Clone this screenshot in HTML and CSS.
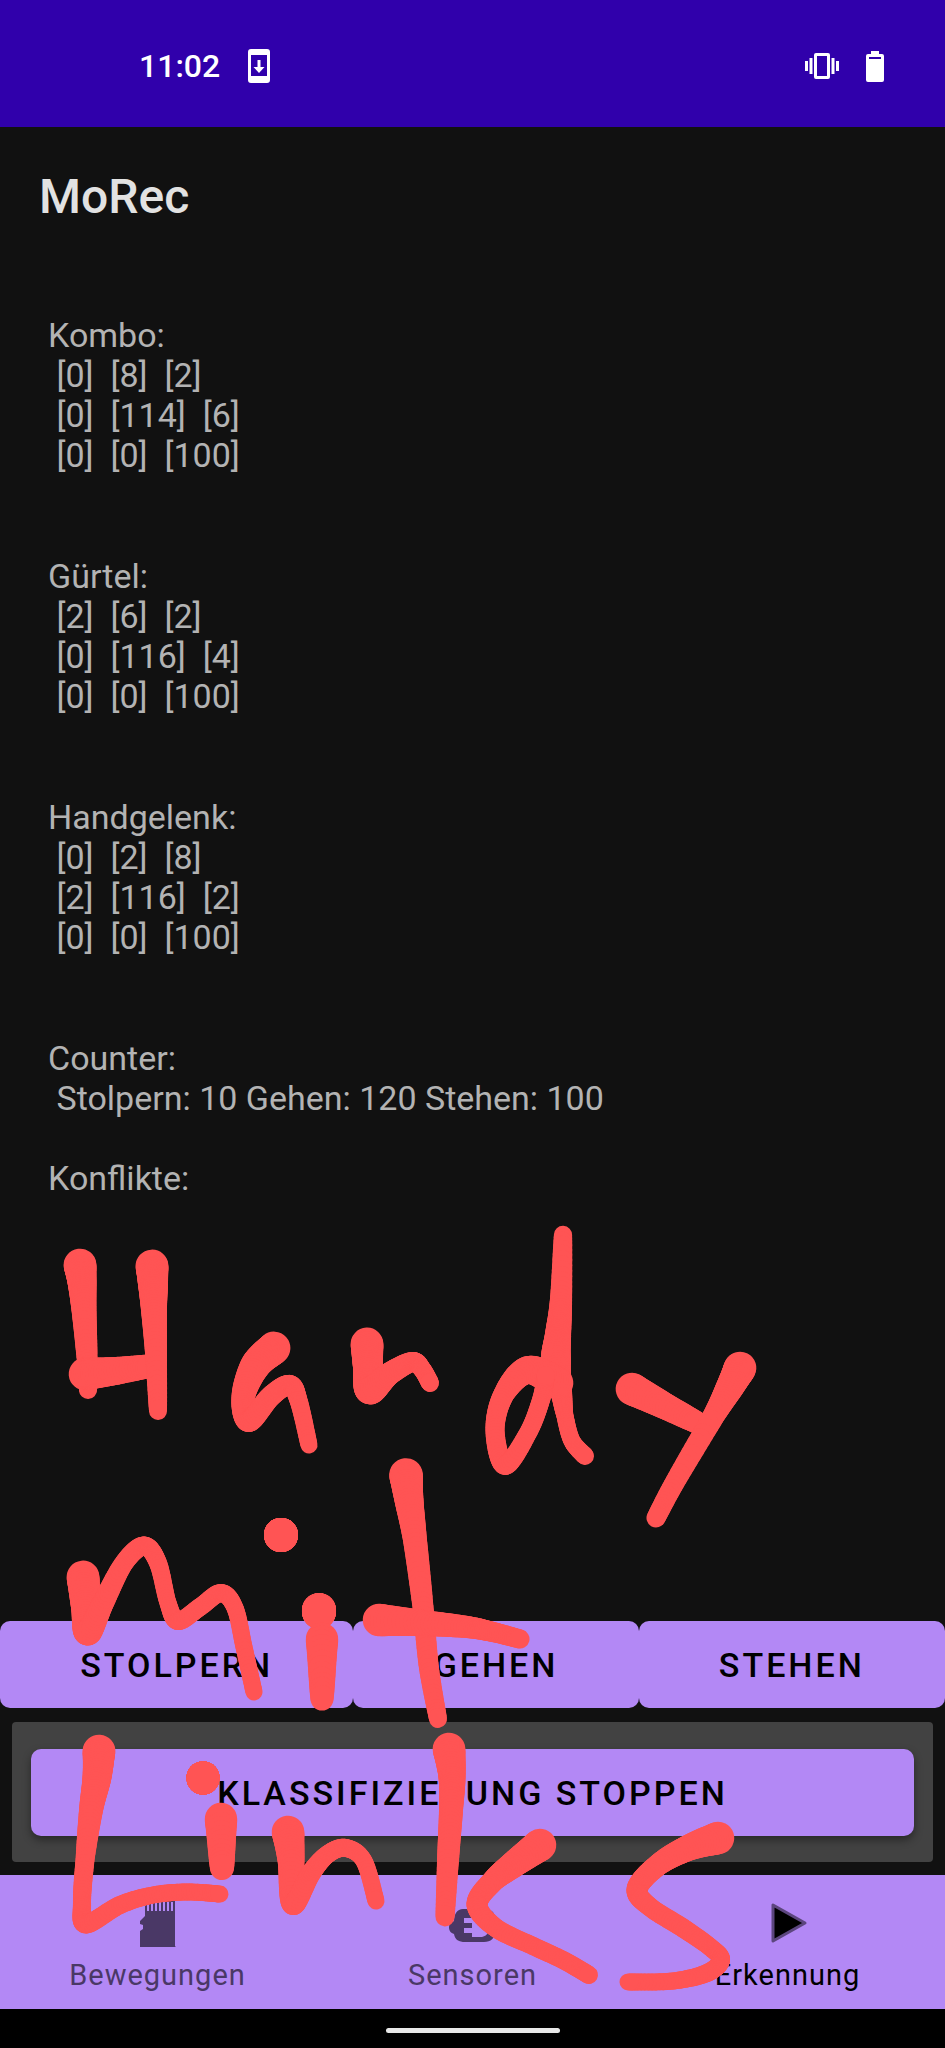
FILE: index.html
```
<!DOCTYPE html>
<html lang="de">
<head>
<meta charset="utf-8">
<meta name="viewport" content="width=device-width, initial-scale=1">
<title>MoRec</title>
<link rel="stylesheet" href="styles.css">
</head>
<body>
<div class="screen">
  <div class="status">
    <span class="clock">11:02</span>
    <svg class="status-icon" width="22" height="34" viewBox="0 0 22 34" aria-hidden="true">
      <path fill="#fff" fill-rule="evenodd" d="M3 0h16a3 3 0 0 1 3 3v28a3 3 0 0 1-3 3H3a3 3 0 0 1-3-3V3a3 3 0 0 1 3-3zM3 6v21h16V6zM9.500 11h3v7h4L11 24l-5.500-6h4z"/>
    </svg>
    <span class="spacer"></span>
    <svg class="status-icon" width="34" height="26" viewBox="0 0 34 26" aria-hidden="true">
      <path fill="#fff" fill-rule="evenodd" d="M0 8h3v10H0zM4.500 5h3v16h-3zM26.500 5h3v16h-3zM31 8h3v10h-3zM11 0h12a2 2 0 0 1 2 2v22a2 2 0 0 1-2 2H11a2 2 0 0 1-2-2V2a2 2 0 0 1 2-2zM12 3v20h10V3z"/>
    </svg>
    <svg class="battery" width="18" height="31" viewBox="0 0 18 31" aria-hidden="true">
      <path fill="#fff" fill-rule="evenodd" d="M5 0h8v3h3a2 2 0 0 1 2 2v24a2 2 0 0 1-2 2H2a2 2 0 0 1-2-2V5a2 2 0 0 1 2-2h3zM3 6v2h12V6z"/>
    </svg>
  </div>
  <header class="appbar"><h1>MoRec</h1></header>
  <main class="results">
    <section class="block">Kombo:
 [0]  [8]  [2]
 [0]  [114]  [6]
 [0]  [0]  [100]</section>
    <section class="block">Gürtel:
 [2]  [6]  [2]
 [0]  [116]  [4]
 [0]  [0]  [100]</section>
    <section class="block">Handgelenk:
 [0]  [2]  [8]
 [2]  [116]  [2]
 [0]  [0]  [100]</section>
    <section class="block">Counter:
 Stolpern: 10 Gehen: 120 Stehen: 100

Konflikte:</section>
  </main>
  <div class="choices">
    <button class="btn" type="button">STOLPERN</button>
    <button class="btn" type="button">GEHEN</button>
    <button class="btn" type="button">STEHEN</button>
  </div>
  <div class="card">
    <button class="btn raised" type="button">KLASSIFIZIERUNG STOPPEN</button>
  </div>
  <nav class="tabs">
    <a class="tab" href="#bewegungen">
      <svg width="48" height="48" viewBox="0 0 48 48" aria-hidden="true">
        <path fill="currentColor" d="M16 1h24a1 1 0 0 1 1 1v45a1 1 0 0 1-1 2H7a1 1 0 0 1-1-1V32l3-2v-4l-3-1v-3l5-5V7z"/>
        <path stroke="#b388f5" stroke-width="2" d="M14 3v9M18 3v9M22 3v9M26 3v9M30 3v9M34 3v9M38 3v9"/>
      </svg>
      <span>Bewegungen</span>
    </a>
    <a class="tab" href="#sensoren">
      <svg width="48" height="48" viewBox="0 0 48 48" aria-hidden="true">
        <path fill="currentColor" fill-rule="evenodd" d="M14 10h24c5 1 8 4 8 9v14c0 6-4 10-11 10H16c-6 0-10-2-11-8-3-1-5-3-5-7 0-3 2-5 5-6 0-7 3-12 9-12zM15 19v5h8v5h-8v5h8v4h10c4-1 6-3 6-7v-8c0-3-2-4-5-4z"/>
      </svg>
      <span>Sensoren</span>
    </a>
    <a class="tab active" href="#erkennung" aria-current="page">
      <svg width="48" height="48" viewBox="0 0 48 48" aria-hidden="true">
        <path fill="currentColor" stroke="#5c467e" stroke-width="3" stroke-linejoin="round" d="M9 6v36l32-18z"/>
      </svg>
      <span>Erkennung</span>
    </a>
  </nav>
  <div class="gesture"><span class="pill"></span></div>
  <svg class="ink" viewBox="0 0 945 2048" role="img" aria-label="Handy mit Links"></svg>
</div>
<script src="ink.js"></script>
</body>
</html>
```
FILE: styles.css
```
* { box-sizing: border-box; }
body {
  margin: 0;
  background: #111;
  font-family: Roboto, "Noto Sans", sans-serif;
}
.screen {
  position: relative;
  min-height: 100vh;
  display: flex;
  flex-direction: column;
}
.status {
  display: flex;
  align-items: center;
  height: 127px;
  padding: 5px 61px 0 139px;
  background: #3000ab;
}
.clock {
  width: 109px;
  color: #fff;
  font-size: 32px;
  font-weight: 500;
}
.spacer { flex: 1; }
.battery { margin-left: 27px; }
.appbar { padding: 40px 39px 0; }
h1 {
  margin: 0;
  color: #e2e2e2;
  font-size: 48px;
  line-height: 60px;
  font-weight: 500;
}
.results {
  flex: 1;
  display: flex;
  flex-direction: column;
  gap: 81px;
  padding: 88px 48px 0;
  color: #b3b3b3;
  font-size: 34px;
  line-height: 40px;
}
.block { white-space: pre-wrap; }
.choices { display: flex; }
.btn {
  flex: 1 1 auto;
  height: 87px;
  padding: 0 30px;
  border: 0;
  border-radius: 10px;
  background: #b388f5;
  color: #000;
  font-family: inherit;
  font-size: 34px;
  font-weight: 500;
  letter-spacing: 3px;
}
.card {
  display: flex;
  margin: 14px 12px 13px;
  padding: 27px 19px 26px;
  border-radius: 4px;
  background: #424242;
}
.raised { box-shadow: 0 4px 8px rgba(0, 0, 0, 0.4); }
.tabs {
  display: flex;
  height: 134px;
  background: #b388f5;
}
.tab {
  flex: 1;
  display: flex;
  flex-direction: column;
  align-items: center;
  gap: 10px;
  padding-top: 24px;
  color: #4a3866;
  font-size: 29px;
  line-height: 36px;
  letter-spacing: 1px;
  text-decoration: none;
}
.tab.active { color: #000; }
.gesture {
  display: flex;
  justify-content: center;
  height: 39px;
  padding-top: 19px;
  background: #000;
}
.pill {
  width: 174px;
  height: 5px;
  border-radius: 3px;
  background: #e8e8e8;
}
.ink {
  position: absolute;
  top: 0;
  left: 0;
  width: 100%;
  height: 100%;
  pointer-events: none;
}
```
FILE: ink.js
```
// Freehand marker strokes: each point is [x, y, pen width].
const strokes = [
  [[80,1265,33],[82,1282,29],[84,1310,25],[87,1357,21],[88,1390,18]],
  [[85,1374,33],[115,1371,28],[150,1366,23]],
  [[152,1266,33],[153,1284,30],[154,1310,26],[156,1353,22],[158,1411,18]],
  [[274,1348,33],[255,1366,30],[243,1398,23],[249,1421,22],[271,1396,21],[290,1385,20],[299,1402,18],[309,1445,17]],
  [[367,1344,33],[368,1367,30],[370,1390,29],[389,1374,23],[412,1362,20],[422,1369,18],[430,1383,18]],
  [[563,1235,18],[561,1300,22],[558,1335,26],[556,1360,30],[561,1390,22],[565,1416,17],[572,1441,17],[585,1456,18]],
  [[557,1383,33],[528,1370,28],[504,1394,21],[495,1430,19],[505,1465,20],[528,1433,18],[541,1400,18],[546,1375,18]],
  [[632,1389,33],[663,1405,27],[698,1423,22]],
  [[740,1368,33],[730,1387,28],[713,1417,22],[675,1482,20],[656,1518,19]],
  [[83,1577,33],[86,1607,30],[88,1632,27],[103,1603,22],[124,1563,19],[144,1546,19],[158,1563,18],[168,1603,17],[178,1621,18],[200,1607,18],[221,1593,18],[235,1608,17],[244,1647,17],[254,1692,17]],
  [[281,1535,34],[281,1535,34]],
  [[319,1610,34],[319,1612,34]],
  [[322,1639,33],[322,1699,23]],
  [[406,1475,34],[409,1500,29],[415,1540,24],[423,1607,21],[429,1668,20],[438,1719,18]],
  [[379,1620,33],[423,1623,26],[467,1627,22],[493,1632,20],[520,1639,19]],
  [[99,1751,33],[97,1777,29],[91,1810,24],[85,1860,19],[82,1903,18],[86,1924,19],[120,1905,18],[153,1895,17],[187,1892,17],[220,1894,17]],
  [[203,1778,33],[203,1778,33]],
  [[221,1819,33],[222,1868,24]],
  [[288,1832,33],[291,1860,27],[293,1904,22],[311,1873,20],[328,1854,18],[346,1848,18],[364,1861,17],[376,1901,17]],
  [[449,1749,33],[452,1777,27],[451,1810,24],[448,1860,22],[445,1917,19]],
  [[540,1845,33],[514,1864,27],[492,1882,22],[477,1905,21],[496,1928,19],[533,1946,18],[563,1960,18],[589,1975,18]],
  [[718,1838,33],[688,1848,26],[658,1865,22],[637,1889,21],[650,1907,19],[683,1928,19],[710,1947,18],[721,1960,18],[707,1973,18],[673,1981,17],[628,1982,17]]
];

const ink = document.querySelector(".ink");
const STEPS = 14;

function spline(a, b, c, d, t) {
  return 0.5 * (2 * b + (c - a) * t + (2 * a - 5 * b + 4 * c - d) * t * t + (3 * b - a - 3 * c + d) * t * t * t);
}

for (const points of strokes) {
  const at = (i) => points[Math.max(0, Math.min(points.length - 1, i))];
  let last = points[0];
  for (let i = 0; i < points.length - 1; i++) {
    for (let s = 1; s <= STEPS; s++) {
      const t = s / STEPS;
      const next = [0, 1].map((k) => spline(at(i - 1)[k], at(i)[k], at(i + 1)[k], at(i + 2)[k], t));
      next.push(at(i)[2] + (at(i + 1)[2] - at(i)[2]) * t);
      const line = document.createElementNS("http://www.w3.org/2000/svg", "line");
      line.setAttribute("x1", last[0]);
      line.setAttribute("y1", last[1]);
      line.setAttribute("x2", next[0]);
      line.setAttribute("y2", next[1]);
      line.setAttribute("stroke", "#ff5454");
      line.setAttribute("stroke-width", next[2]);
      line.setAttribute("stroke-linecap", "round");
      ink.appendChild(line);
      last = next;
    }
  }
}
```
